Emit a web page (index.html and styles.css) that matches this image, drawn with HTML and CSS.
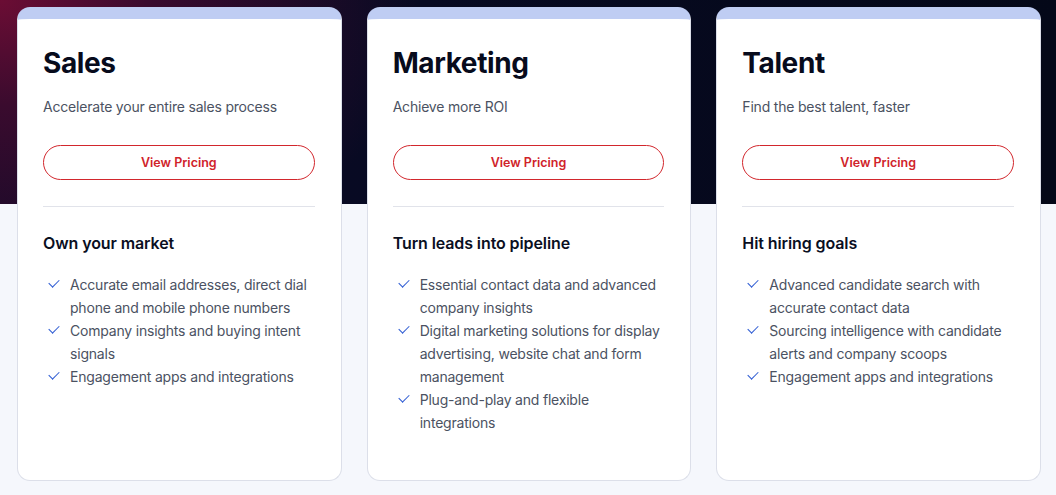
FILE: index.html
```html
<!DOCTYPE html>
<html lang="en">
<head>
<meta charset="utf-8">
<title>Pricing</title>
<link rel="stylesheet" href="styles.css">
</head>
<body>
<section class="plans">
  <div class="plans-grid">
    <article class="card">
      <h2 class="card-title">Sales</h2>
      <p class="card-sub">Accelerate your entire sales process</p>
      <a class="btn" href="#">View Pricing</a>
      <hr class="divider">
      <h3 class="card-head">Own your market</h3>
      <ul class="features">
        <li>Accurate email addresses, direct dial phone and mobile phone numbers</li>
        <li>Company insights and buying intent signals</li>
        <li>Engagement apps and integrations</li>
      </ul>
    </article>
    <article class="card">
      <h2 class="card-title">Marketing</h2>
      <p class="card-sub">Achieve more ROI</p>
      <a class="btn" href="#">View Pricing</a>
      <hr class="divider">
      <h3 class="card-head">Turn leads into pipeline</h3>
      <ul class="features">
        <li>Essential contact data and advanced company insights</li>
        <li>Digital marketing solutions for display advertising, website chat and form management</li>
        <li>Plug-and-play and flexible integrations</li>
      </ul>
    </article>
    <article class="card">
      <h2 class="card-title">Talent</h2>
      <p class="card-sub">Find the best talent, faster</p>
      <a class="btn" href="#">View Pricing</a>
      <hr class="divider">
      <h3 class="card-head">Hit hiring goals</h3>
      <ul class="features">
        <li>Advanced candidate search with accurate contact data</li>
        <li>Sourcing intelligence with candidate alerts and company scoops</li>
        <li>Engagement apps and integrations</li>
      </ul>
    </article>
  </div>
</section>
</body>
</html>
```

FILE: styles.css
```css
* { box-sizing: border-box; }

html, body {
  margin: 0;
  padding: 0;
}

body {
  font-family: Inter, "Noto Sans", "DejaVu Sans", sans-serif;
  background: #f5f7fc;
  height: 495px;
  overflow: hidden;
}

.plans {
  background:
    radial-gradient(ellipse 420px 300px at 0 0, #6b0d34 0%, #3a0b2e 35%, rgba(10, 9, 35, 0) 100%) 0 0 / 100% 204px no-repeat,
    linear-gradient(90deg, #0e0a28 0%, #070a22 40%, #040818 100%) 0 0 / 100% 204px no-repeat,
    #f5f7fc;
  padding: 7px 15px 15px 17px;
}

.plans-grid {
  display: grid;
  grid-template-columns: repeat(3, 1fr);
  gap: 25px;
}

.card {
  background: #ffffff;
  border: 1px solid #dcdfe9;
  border-top: 12px solid #bfcdf3;
  border-radius: 13px;
  padding: 27px 26px 46px 25px;
}

.card-title {
  margin: 0;
  font-size: 28px;
  line-height: 34px;
  font-weight: 700;
  color: #070b1c;
  letter-spacing: -0.4px;
}

.card-sub {
  margin: 17px 0 0;
  font-size: 14px;
  line-height: 20px;
  color: #4b5262;
  letter-spacing: -0.2px;
}

.btn {
  display: flex;
  align-items: center;
  justify-content: center;
  margin-top: 28px;
  height: 35px;
  border: 1px solid #d2272d;
  border-radius: 18px;
  color: #d0232a;
  font-size: 12.5px;
  font-weight: 600;
  text-decoration: none;
}

.divider {
  margin: 26px 0 0;
  border: 0;
  border-top: 1px solid #e1e3ea;
  height: 0;
}

.card-head {
  margin: 25px 0 0;
  font-size: 16px;
  line-height: 22px;
  font-weight: 600;
  color: #0a0f1f;
  letter-spacing: -0.1px;
}

.features {
  list-style: none;
  margin: 19px 0 0;
  padding: 0;
}

.features li {
  position: relative;
  padding-left: 27px;
  font-size: 14px;
  line-height: 23px;
  color: #4b5262;
  letter-spacing: -0.2px;
}

.features li::before {
  content: "";
  position: absolute;
  left: 6px;
  top: 6px;
  width: 9px;
  height: 5px;
  border-left: 1.5px solid #2d5bd3;
  border-bottom: 1.5px solid #2d5bd3;
  transform: rotate(-45deg);
}
```
